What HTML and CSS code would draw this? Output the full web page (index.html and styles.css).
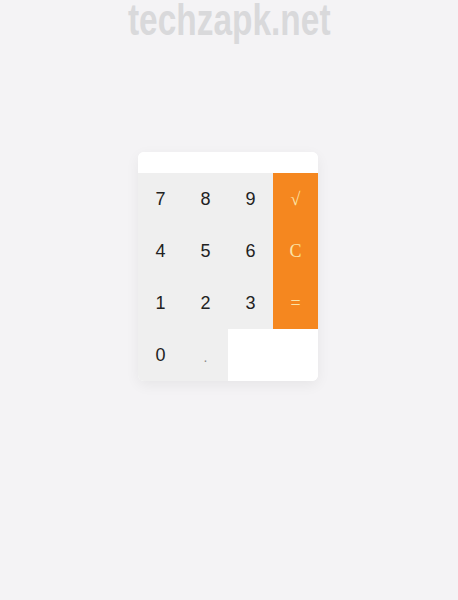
FILE: index.html
```
<!DOCTYPE html>
<html>
<head>
<meta charset="utf-8">
<link rel="stylesheet" href="styles.css">
</head>
<body>
<div class="watermark">techzapk.net</div>
<div class="calc">
  <div class="display"></div>
  <div class="key">7</div>
  <div class="key">8</div>
  <div class="key">9</div>
  <div class="key op">√</div>
  <div class="key">4</div>
  <div class="key">5</div>
  <div class="key">6</div>
  <div class="key op">C</div>
  <div class="key">1</div>
  <div class="key">2</div>
  <div class="key">3</div>
  <div class="key op">=</div>
  <div class="key">0</div>
  <div class="key dot">.</div>
  <div class="blank"></div>
</div>
</body>
</html>
```
FILE: styles.css
```
html, body {
  margin: 0;
  padding: 0;
  background: #f4f3f5;
}
body {
  width: 458px;
  height: 600px;
  display: flex;
  flex-direction: column;
  align-items: center;
}
.watermark {
  font-family: "Liberation Sans", Arial, sans-serif;
  font-weight: bold;
  font-size: 44px;
  line-height: 40px;
  height: 40px;
  color: #d9d9db;
  transform: scaleX(0.76);
  margin-top: 0;
}
.calc {
  margin-top: 112px;
  margin-right: 2px;
  width: 180px;
  display: grid;
  grid-template-columns: repeat(4, 45px);
  grid-template-rows: 21px repeat(4, 52px);
  background: #ffffff;
  border-radius: 6px;
  overflow: hidden;
  box-shadow: 0 4px 14px rgba(0, 0, 0, 0.06);
}
.display {
  grid-column: 1 / span 4;
  background: #ffffff;
}
.key {
  display: flex;
  align-items: center;
  justify-content: center;
  background: #efefef;
  font-family: "Liberation Sans", Arial, sans-serif;
  font-size: 18px;
  color: #222222;
}
.key.op {
  background: #f5871f;
  color: #fbe3a6;
  font-family: "Liberation Serif", "Times New Roman", serif;
  font-size: 18px;
}
.key.dot {
  color: #8a8a8a;
  font-size: 14px;
  padding-top: 4px;
}
.blank {
  grid-column: 3 / span 2;
  background: #ffffff;
}
```
